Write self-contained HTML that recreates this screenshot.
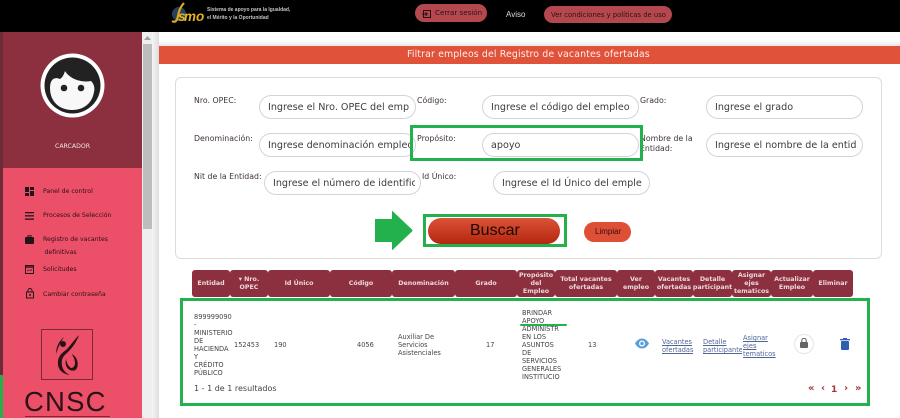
<!DOCTYPE html>
<html lang="es"><head><meta charset="utf-8"><title>Filtrar empleos</title>
<style>
html,body{margin:0;padding:0;width:900px;height:418px;overflow:hidden;background:#fff}
*{box-sizing:border-box}
.a{position:absolute}
body{font-family:"DejaVu Sans",sans-serif;color:#333;position:relative}
.t{position:absolute;white-space:nowrap}
.lb{position:absolute;font-size:7.8px;line-height:9.5px;color:#3f3236;white-space:nowrap}
.in{position:absolute;height:24px;width:157px;border:1px solid #cfd4de;border-radius:12px;background:#fff;font-size:9.6px;line-height:23.5px;padding-left:8px;color:#3c3c3c;white-space:nowrap;overflow:hidden}
.in span{display:block;width:142px;overflow:hidden}
.g{position:absolute;border:3px solid #22b14c}
.m{position:absolute;font-size:6.2px;color:#2a0f16;white-space:nowrap;line-height:9px}
.th{position:absolute;top:270px;height:27px;background:#8c3040;color:#edd9dc;font-size:6.3px;font-weight:bold;text-align:center;display:flex;align-items:center;justify-content:center;line-height:8px;border-radius:3px}
.c{position:absolute;font-size:6.6px;line-height:8px;color:#444;white-space:nowrap;overflow:hidden}
.lk{color:#4f6596;text-decoration:underline}
.p{position:absolute;top:383px;font:bold 10px/12px "DejaVu Sans",sans-serif;color:#a8323a;white-space:nowrap}
</style></head><body>
<div class="a" style="left:0;top:0;width:900px;height:32px;background:#000"></div>

<!-- logo -->
<svg class="a" style="left:170px;top:0" width="36" height="26" viewBox="0 0 36 26">
<circle cx="9" cy="14" r="7" fill="#27405f"/>
<path d="M14 3 C11 6 9 10 8 16 C7 21 5 23 2 21" stroke="#d9a81e" stroke-width="2.200" fill="none"/>
<text x="8" y="21" font-family="Liberation Sans" font-style="italic" font-weight="bold" font-size="14" fill="#e6b422">s</text>
<text x="14" y="21" font-family="Liberation Sans" font-style="italic" font-weight="bold" font-size="13.500" fill="#e6b422">mo</text>
</svg>
<div class="t" style="left:207px;top:7px;font:bold 5px/7.5px 'Liberation Sans',sans-serif;color:#c4c4c4">Sistema de apoyo para la Igualdad,<br>el Mérito y la Oportunidad</div>

<!-- header buttons -->
<div class="a" style="left:415px;top:4px;width:72px;height:18px;border-radius:9px;background:#b5484e"></div>
<svg class="a" style="left:422px;top:9px" width="10" height="10" viewBox="0 0 10 10" fill="none" stroke="#2a0f10" stroke-width="1"><rect x="1.500" y="1.500" width="7" height="7"/><path d="M0 5H5M3.500 3.300L5.300 5L3.500 6.700"/></svg>
<div class="t" style="left:435px;top:8px;font:7.100px/10px 'DejaVu Sans',sans-serif;color:#2a1214">Cerrar sesión</div>
<div class="t" style="left:506px;top:10px;font:8px/10px 'Liberation Sans',sans-serif;color:#ddd">Aviso</div>
<div class="a" style="left:544px;top:6px;width:128px;height:17px;border-radius:9px;background:#b5484e"></div>
<div class="t" style="left:551px;top:10px;font:6.800px/10px 'DejaVu Sans',sans-serif;color:#2a1214">Ver condiciones y políticas de uso</div>

<!-- sidebar -->
<div class="a" style="left:0;top:32px;width:142px;height:136px;background:#8c3040"></div>
<div class="a" style="left:0;top:168px;width:142px;height:250px;background:#ec5068"></div>
<div class="a" style="left:0;top:32px;width:3px;height:386px;background:#6e2a36"></div>
<div class="a" style="left:0;top:375px;width:3px;height:43px;background:#22b14c"></div>
<svg class="a" style="left:40px;top:53px" width="66" height="66" viewBox="40 53 66 66">
<circle cx="72.500" cy="85.500" r="32" fill="#fff"/><circle cx="72.500" cy="85.500" r="28" fill="#222"/>
<path d="M50 88C50 81 53 76 60 79C63 77 64 74 65 71C69 78 80 83 91 81C94 84 95 88 94 92C92 104 83 110 72 110C60 110 50 102 50 88Z" fill="#f8f8f8"/>
<circle cx="64" cy="88" r="3.300" fill="#222"/><circle cx="81" cy="88" r="3.300" fill="#222"/>
</svg>
<div class="t" style="left:55px;top:143px;font:6.200px/8px 'DejaVu Sans',sans-serif;color:#f5e2e5">CARCADOR</div>

<svg class="a" style="left:25px;top:187px" width="9" height="9" viewBox="0 0 9 9" fill="#25131a"><rect width="4" height="5"/><rect y="6" width="4" height="3"/><rect x="5" width="4" height="3"/><rect x="5" y="4" width="4" height="5"/></svg>
<div class="m" style="left:43px;top:187px">Panel de control</div>
<svg class="a" style="left:25px;top:212px" width="9" height="8" viewBox="0 0 9 8" fill="#25131a"><rect width="9" height="1.300"/><rect y="3.200" width="9" height="1.300"/><rect y="6.500" width="9" height="1.300"/></svg>
<div class="m" style="left:43px;top:211px">Procesos de Selección</div>
<svg class="a" style="left:25px;top:235px" width="9" height="9" viewBox="0 0 9 9" fill="#25131a"><rect y="2" width="9" height="7" rx="1"/><path d="M3 2V.7H6V2" fill="none" stroke="#25131a"/></svg>
<div class="m" style="left:43px;top:235px">Registro de vacantes</div>
<div class="m" style="left:44.500px;top:248px">definitivas</div>
<svg class="a" style="left:25px;top:264px" width="9" height="10" viewBox="0 0 9 10" fill="none" stroke="#25131a"><rect x=".5" y="1.500" width="8" height="8"/><path d="M.5 3H8.500" stroke-width="1.400"/><path d="M2 7L4 6L6 6.500L7 5" stroke-width=".6"/></svg>
<div class="m" style="left:43px;top:265px">Solicitudes</div>
<svg class="a" style="left:26px;top:288px" width="8" height="11" viewBox="0 0 8 11" fill="none" stroke="#25131a"><rect x=".5" y="4" width="7" height="6"/><path d="M2 4V2.500A2 2 0 0 1 6 2.500V4"/><rect x="3.200" y="6" width="1.600" height="1.800" fill="#25131a" stroke="none"/></svg>
<div class="m" style="left:43px;top:290px">Cambiar contraseña</div>

<div class="a" style="left:41px;top:329px;width:52px;height:51px;border:1px solid #7d2a38"></div>
<svg class="a" style="left:52px;top:332px" width="30" height="46" viewBox="0 0 30 46" fill="#2a1216">
<circle cx="11" cy="12" r="3"/>
<path d="M27 3C22 8 18 14 15 17C12 20 7 22 6 29C5 37 10 42 18 43C11 40 9 34 10 28C11 24 14 22 17 19C21 15 25 9 27 3Z"/>
<path d="M12 5C7 9 4 15 4 22C6 16 8 11 12 5Z"/>
<path d="M20 22C25 25 27 31 25 36C23 40 18 39 16 36C20 37 23 35 23 31C23 27 21 25 20 22Z"/>
<path d="M14 27C15 33 18 37 24 38C18 40 12 36 14 27Z"/>
</svg>
<div class="t" style="left:24px;top:386px;font:27.500px/32px 'Liberation Sans',sans-serif;color:#2a1216;letter-spacing:1.200px">CNSC</div>
<div class="a" style="left:25px;top:416px;width:85px;height:1px;background:#7d2a38"></div>

<!-- scrollbar -->
<div class="a" style="left:142px;top:32px;width:17px;height:386px;background:#efefef"></div>
<div class="a" style="left:143px;top:44px;width:9px;height:185px;background:#bdbdbd"></div>
<div class="a" style="left:152px;top:32px;width:7px;height:386px;background:linear-gradient(90deg,#f5f5f5,#ddd)"></div>
<svg class="a" style="left:144px;top:36px" width="7" height="5"><path d="M0 4L3.500 0L7 4Z" fill="#a0a0a0"/></svg>
<div class="a" style="left:159px;top:32px;width:741px;height:14px;background:linear-gradient(#fff 60%,#e8e8e8)"></div>

<div class="a" style="left:159px;top:46px;width:741px;height:18px;background:#e0523a"></div>
<div class="t" style="left:407px;top:49px;font:9.400px/12px 'DejaVu Sans',sans-serif;color:#fff0ea;letter-spacing:.13px">Filtrar empleos del Registro de vacantes ofertadas</div>

<!-- filter card -->
<div class="a" style="left:175px;top:77px;width:707px;height:182px;border:1px solid #dcdcdc;border-radius:6px"></div>

<div class="lb" style="left:194px;top:96px">Nro. OPEC:</div>
<div class="in" style="left:259px;top:95px"><span>Ingrese el Nro. OPEC del emp</span></div>
<div class="lb" style="left:417px;top:96px">Código:</div>
<div class="in" style="left:482px;top:95px"><span>Ingrese el código del empleo</span></div>
<div class="lb" style="left:640px;top:96px">Grado:</div>
<div class="in" style="left:706px;top:95px"><span>Ingrese el grado</span></div>

<div class="lb" style="left:194px;top:134px">Denominación:</div>
<div class="in" style="left:259px;top:133px"><span>Ingrese denominación emplec</span></div>
<div class="lb" style="left:417px;top:134px">Propósito:</div>
<div class="in" style="left:482px;top:133px"><span>apoyo</span></div>
<div class="lb" style="left:640px;top:134px">Nombre de la<br>Entidad:</div>
<div class="in" style="left:706px;top:133px"><span>Ingrese el nombre de la entid</span></div>

<div class="lb" style="left:194px;top:172px">Nit de la Entidad:</div>
<div class="in" style="left:264px;top:171px"><span>Ingrese el número de identific</span></div>
<div class="lb" style="left:422px;top:172px">Id Único:</div>
<div class="in" style="left:493px;top:171px"><span>Ingrese el Id Único del emple</span></div>

<div class="g" style="left:410px;top:125px;width:233px;height:36px"></div>

<!-- arrow -->
<svg class="a" style="left:374px;top:210px" width="39" height="41" viewBox="0 0 39 41"><path d="M1 9H18V1.500Q18 .5 19 1.500L38 19.500Q39 20.500 38 21.500L19 39.500Q18 40.500 18 39.500V32H1Z" fill="#22b14c"/></svg>
<div class="g" style="left:423px;top:214px;width:144px;height:33px"></div>
<div class="a" style="left:428px;top:218px;width:132px;height:26px;border-radius:13px;background:linear-gradient(#dc5238,#b3270f)"></div>
<div class="t" style="left:470px;top:222px;font:16px/18px 'Liberation Sans',sans-serif;color:#1c0804">Buscar</div>
<div class="a" style="left:584px;top:222px;width:47px;height:20px;border-radius:10px;background:#de4f38"></div>
<div class="t" style="left:595px;top:227px;font:8px/10px 'Liberation Sans',sans-serif;color:#3a0d06">Limpiar</div>

<!-- table head -->
<div class="th" style="left:192px;width:38px">Entidad</div>
<div class="th" style="left:230px;width:38px"><span>▾ Nro.<br>OPEC</span></div>
<div class="th" style="left:268px;width:62px">Id Único</div>
<div class="th" style="left:330px;width:62px">Código</div>
<div class="th" style="left:392px;width:63px">Denominación</div>
<div class="th" style="left:455px;width:62px">Grado</div>
<div class="th" style="left:517px;width:38px"><span>Propósito<br>del<br>Empleo</span></div>
<div class="th" style="left:555px;width:62px"><span>Total vacantes<br>ofertadas</span></div>
<div class="th" style="left:617px;width:38px"><span>Ver<br>empleo</span></div>
<div class="th" style="left:655px;width:38px"><span>Vacantes<br>ofertadas</span></div>
<div class="th" style="left:693px;width:39px"><span>Detalle<br>participant</span></div>
<div class="th" style="left:732px;width:39px"><span>Asignar<br>ejes<br>tematicos</span></div>
<div class="th" style="left:771px;width:42px"><span>Actualizar<br>Empleo</span></div>
<div class="th" style="left:813px;width:40px">Eliminar</div>

<!-- table frame -->
<div class="g" style="left:180px;top:298px;width:690px;height:108px"></div>

<div class="c" style="left:194px;top:313px;width:39px">899999090<br>-<br>MINISTERIO<br>DE<br>HACIENDA<br>Y<br>CRÉDITO<br>PÚBLICO</div>
<div class="c" style="left:234px;top:341px">152453</div>
<div class="c" style="left:274px;top:341px">190</div>
<div class="c" style="left:357px;top:341px">4056</div>
<div class="c" style="left:398px;top:333px">Auxiliar De<br>Servicios<br>Asistenciales</div>
<div class="c" style="left:486px;top:341px">17</div>
<div class="c" style="left:522px;top:309px;width:39px">BRINDAR<br>APOYO<br>ADMINISTR<br>EN LOS<br>ASUNTOS<br>DE<br>SERVICIOS<br>GENERALES<br>INSTITUCIO</div>
<div class="a" style="left:520px;top:323.500px;width:47px;height:2.500px;border-radius:2px;background:#22b14c"></div>
<div class="c" style="left:588px;top:341px">13</div>

<svg class="a" style="left:635px;top:338px" width="14" height="11" viewBox="0 0 14 11"><path d="M0 5.500C2 2 4.500 .5 7 .5S12 2 14 5.500C12 9 9.500 10.500 7 10.500S2 9 0 5.500Z" fill="#5a9fd8"/><circle cx="7" cy="5.500" r="3" fill="#fff"/><circle cx="7" cy="5.500" r="1.700" fill="#5a9fd8"/></svg>
<div class="c lk" style="left:662px;top:338px">Vacantes<br>ofertadas</div>
<div class="c lk" style="left:703px;top:338px;width:39px">Detalle<br>participantes</div>
<div class="c lk" style="left:743px;top:334px">Asignar<br>ejes<br>tematicos</div>

<div class="a" style="left:794px;top:334px;width:20px;height:20px;border-radius:50%;border:1px solid #e4e4e4"></div>
<svg class="a" style="left:800px;top:338px" width="8" height="10" viewBox="0 0 8 10" fill="#666"><rect y="4" width="8" height="6" rx="1"/><path d="M1.800 4V2.500A2.200 2.200 0 0 1 6.200 2.500V4" fill="none" stroke="#666" stroke-width="1.100"/></svg>
<svg class="a" style="left:840px;top:338px" width="10" height="12" viewBox="0 0 10 12" fill="#2f5fae"><rect x="1" y="3" width="8" height="9" rx="1"/><rect y="1" width="10" height="1.300"/><rect x="3" y="0" width="4" height="1.300"/></svg>

<div class="t" style="left:194px;top:384px;font:8px/10px 'DejaVu Sans',sans-serif;color:#444">1 - 1 de 1 resultados</div>
<div class="p" style="left:808px">«</div>
<div class="p" style="left:821px">‹</div>
<div class="p" style="left:831px;top:384px;font-size:9px">1</div>
<div class="p" style="left:844px">›</div>
<div class="p" style="left:855px">»</div>
</body></html>
